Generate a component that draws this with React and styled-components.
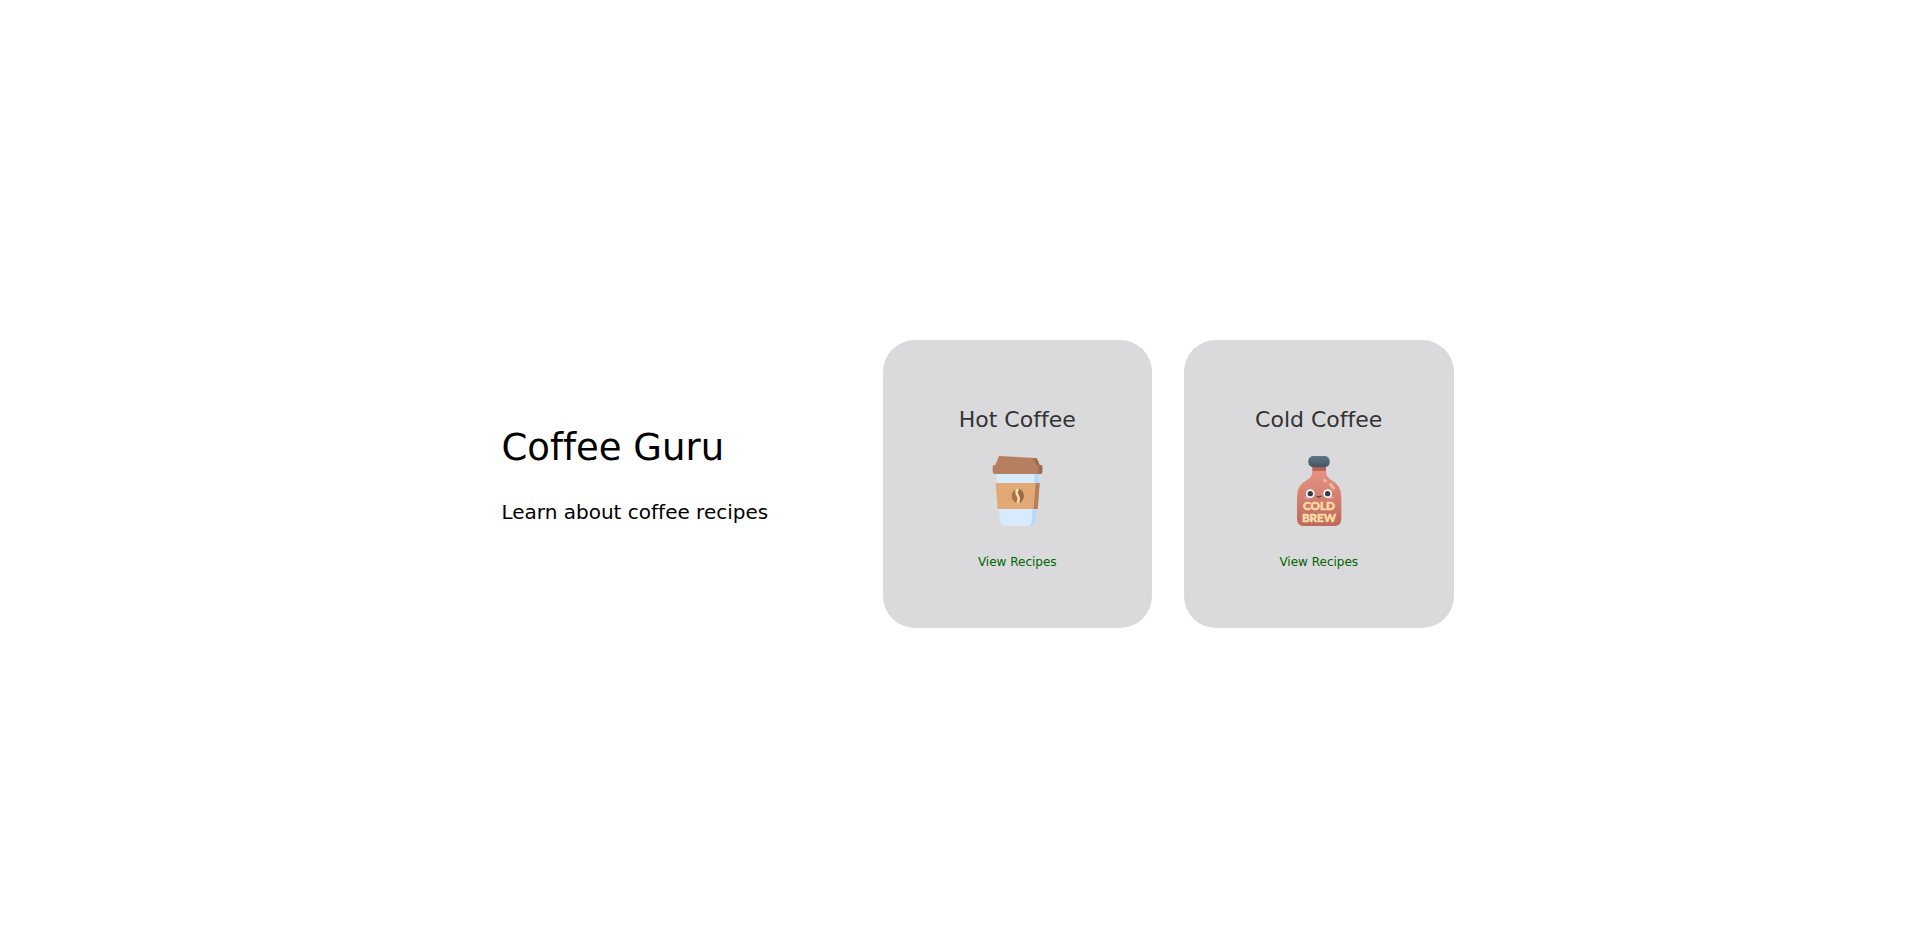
import React from 'react';
import styled, { createGlobalStyle } from 'styled-components';

const GlobalStyle = createGlobalStyle`
  *, *::before, *::after { box-sizing: border-box; }
  body {
    margin: 0;
    background: #fff;
    color: #000;
    font-family: Verdana, 'DejaVu Sans', sans-serif;
    font-variant-ligatures: none;
  }
`;

const Page = styled.main`
  display: flex;
  align-items: center;
  justify-content: center;
  min-height: 100vh;
  padding: 16px 0 0;
`;

const Container = styled.div`
  display: flex;
  flex-wrap: wrap;
  align-items: center;
  width: 100%;
  max-width: 992px;
`;

const Intro = styled.header`
  flex: 1;
  min-width: 320px;
  padding: 0 0 16px 40px;
`;

const Title = styled.h1`
  margin: 0 0 28px;
  font-size: 37px;
  line-height: 44px;
  font-weight: 400;
`;

const Tagline = styled.p`
  margin: 0;
  font-size: 20px;
  line-height: 28px;
`;

const Cards = styled.section`
  display: grid;
  grid-template-columns: 1fr 1fr;
  gap: 32px;
  flex: 0 1 571px;
`;

const Card = styled.article`
  display: flex;
  flex-direction: column;
  align-items: center;
  min-height: 288px;
  padding: 66px 24px 56px;
  border-radius: 32px;
  background: #dadadc;
`;

const CardTitle = styled.h2`
  margin: 0 0 22px;
  color: #333;
  font-size: 22px;
  line-height: 28px;
  font-weight: 400;
`;

const Icon = styled.svg`
  display: block;
  width: 70px;
  height: 70px;
  margin-bottom: 28px;
`;

const RecipeLink = styled.a`
  color: #006400;
  font-size: 12px;
  line-height: 16px;
  text-decoration: none;
`;

const Lettering = styled.text`
  fill: #fddaa6;
  stroke: #fddaa6;
  stroke-width: 2px;
  stroke-linejoin: round;
  font-family: Lato, sans-serif;
  font-weight: 700;
  font-size: 35px;
  text-anchor: middle;
`;

function HotCup() {
  return (
    <Icon viewBox="7 33 210 210" aria-hidden="true">
      <path d="M50 84H178L167 230Q166 243 154 243H75Q62 243 61 230Z" fill="#d8ebfd" />
      <path d="M165 84H178L167 230Q166 243 154 243H143Q155 242 156 230Z" fill="#b3dafe" />
      <path d="M48 114H180L174 192H54Z" fill="#e2a975" />
      <path d="M168 114H180L174 192H162Z" fill="#b67f5f" />
      <path d="M58 33L168 39Q172 40 174 45L180 60H184Q188 60 188 65V80Q188 87 182 87H46Q39 87 39 80V65Q39 60 43 60H47Z" fill="#b67f5f" />
      <path d="M159 39H168Q172 40 174 45L180 60H184Q188 60 188 65V80Q188 87 182 87H171Q176 86 176 80V65Q176 61 170 60Z" fill="#a06c4e" />
      <ellipse cx="114" cy="153" rx="18" ry="21" fill="#a97352" />
      <path d="M118 132Q132 137 132 153T118 174Q123 161 117 151T118 132Z" fill="#9b6849" />
      <path d="M108 133Q114 130 118 133Q113 142 117 149Q124 160 118 174Q114 175 110 173Q116 162 111 154Q105 145 108 133Z" fill="#f8e3a1" />
    </Icon>
  );
}

function ColdBottle() {
  return (
    <Icon viewBox="12 33 210 210" role="img" aria-label="Cold brew bottle">
      <defs>
        <linearGradient id="glass" x1="0" y1="0" x2="0" y2="1">
          <stop offset="0" stopColor="#e99888" />
          <stop offset="1" stopColor="#bd6a59" />
        </linearGradient>
        <linearGradient id="cap" x1="0" y1="0" x2="0" y2="1">
          <stop offset="0" stopColor="#5d7684" />
          <stop offset="1" stopColor="#465461" />
        </linearGradient>
      </defs>
      <path d="M97 60H138V80Q138 96 153 104Q184 120 184 155V221Q184 243 162 243H73Q51 243 51 221V155Q51 120 82 104Q97 96 97 80Z" fill="url(#glass)" />
      <path d="M97 64H138V78H97Z" fill="#bd6458" />
      <rect x="85" y="33" width="64" height="34" rx="15" fill="url(#cap)" />
      <path d="M133 105L137 109M151 118L161 130" stroke="#f3b5ac" strokeWidth="8" strokeLinecap="round" />
      <ellipse cx="82" cy="157" rx="8" ry="6" fill="#f58fae" />
      <ellipse cx="152" cy="157" rx="8" ry="6" fill="#f58fae" />
      <circle cx="91" cy="146" r="13" fill="#fff" />
      <circle cx="143" cy="146" r="13" fill="#fff" />
      <circle cx="91" cy="146" r="8" fill="#333b47" />
      <circle cx="143" cy="146" r="8" fill="#333b47" />
      <path d="M112 154Q117 159 122 154" fill="none" stroke="#4f3c42" strokeWidth="4" strokeLinecap="round" />
      <Lettering x="117" y="195">COLD</Lettering>
      <Lettering x="117" y="230">BREW</Lettering>
    </Icon>
  );
}

const drinks = [
  { name: 'Hot Coffee', href: '#hot', Picture: HotCup },
  { name: 'Cold Coffee', href: '#cold', Picture: ColdBottle },
];

export default function App() {
  return (
    <>
      <GlobalStyle />
      <Page>
        <Container>
          <Intro>
            <Title>Coffee Guru</Title>
            <Tagline>Learn about coffee recipes</Tagline>
          </Intro>
          <Cards>
            {drinks.map(({ name, href, Picture }) => (
              <Card key={name}>
                <CardTitle>{name}</CardTitle>
                <Picture />
                <RecipeLink href={href}>View Recipes</RecipeLink>
              </Card>
            ))}
          </Cards>
        </Container>
      </Page>
    </>
  );
}
